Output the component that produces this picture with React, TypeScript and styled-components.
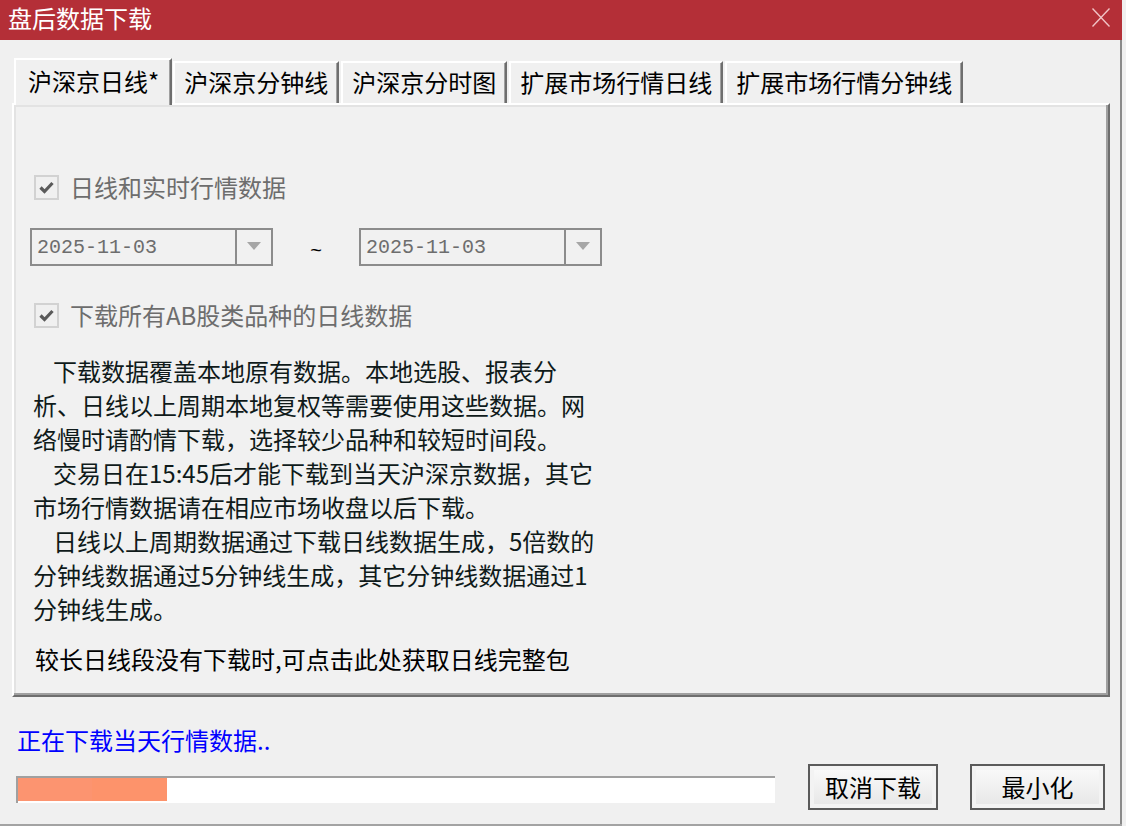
import styled, { createGlobalStyle } from "styled-components";

const GlobalStyle = createGlobalStyle`
	html, body {
		margin: 0;
		padding: 0;
		background: #f0f0f0;
	}
	body {
		font-family: "Noto Sans CJK SC", "Noto Sans", sans-serif;
	}
`;

const tabs = ["沪深京日线*", "沪深京分钟线", "沪深京分时图", "扩展市场行情日线", "扩展市场行情分钟线"];

const notes = [
	{ text: "下载数据覆盖本地原有数据。本地选股、报表分", indent: true },
	{ text: "析、日线以上周期本地复权等需要使用这些数据。网", indent: false },
	{ text: "络慢时请酌情下载，选择较少品种和较短时间段。", indent: false },
	{ text: "交易日在15:45后才能下载到当天沪深京数据，其它", indent: true },
	{ text: "市场行情数据请在相应市场收盘以后下载。", indent: false },
	{ text: "日线以上周期数据通过下载日线数据生成，5倍数的", indent: true },
	{ text: "分钟线数据通过5分钟线生成，其它分钟线数据通过1", indent: false },
	{ text: "分钟线生成。", indent: false },
];

const CheckMark = () => (
	<svg width="15" height="13" viewBox="0 0 15 13">
		<polyline points="1.5,6.5 5.5,10.5 13.5,2" fill="none" stroke="#5a5a5a" strokeWidth="3.2" />
	</svg>
);

const DateBox = ({ value }: { value: string }) => (
	<Combo>
		<ComboText>{value}</ComboText>
		<ComboButton>
			<svg width="14" height="9" viewBox="0 0 14 9">
				<polygon points="0,0 14,0 7,8" fill="#a6a6a6" />
			</svg>
		</ComboButton>
	</Combo>
);

const App = () => {
	const progress = 149;

	return (
		<>
			<GlobalStyle />
			<Window>
				<TitleBar>
					<Title>盘后数据下载</Title>
					<CloseButton>
						<svg width="18" height="19" viewBox="0 0 18 19">
							<line x1="0.5" y1="0.5" x2="17.5" y2="18.5" stroke="#f1c4c6" strokeWidth="1.4" />
							<line x1="17.5" y1="0.5" x2="0.5" y2="18.5" stroke="#f1c4c6" strokeWidth="1.4" />
						</svg>
					</CloseButton>
				</TitleBar>

				<Body>
					<TabStrip>
						{tabs.map((label, idx) => (
							<Tab key={`tab${idx}`} $active={idx === 0}>
								{label}
							</Tab>
						))}
					</TabStrip>

					<Panel>
						<CheckRow $top={69}>
							<CheckBox>
								<CheckMark />
							</CheckBox>
							<CheckLabel>日线和实时行情数据</CheckLabel>
						</CheckRow>

						<DateRow>
							<DateBox value="2025-11-03" />
							<Tilde>~</Tilde>
							<DateBox value="2025-11-03" />
						</DateRow>

						<CheckRow $top={36}>
							<CheckBox>
								<CheckMark />
							</CheckBox>
							<CheckLabel>下载所有AB股类品种的日线数据</CheckLabel>
						</CheckRow>

						<Notes>
							{notes.map((line, idx) => (
								<NoteLine key={`note${idx}`} $indent={line.indent}>
									{line.text}
								</NoteLine>
							))}
						</Notes>

						<LinkLine>较长日线段没有下载时,可点击此处获取日线完整包</LinkLine>
					</Panel>

					<Status>正在下载当天行情数据..</Status>

					<BottomRow>
						<ProgressTrack>
							<ProgressFill style={{ width: progress }} />
						</ProgressTrack>
						<Buttons>
							<Button $width={130}>取消下载</Button>
							<Button $width={135}>最小化</Button>
						</Buttons>
					</BottomRow>
				</Body>
			</Window>
		</>
	);
};

const Window = styled.div`
	width: 1122px;
	height: 826px;
	box-sizing: border-box;
	border-bottom: 2px solid #a3a3a3;
	display: flex;
	flex-direction: column;
	background: #f0f0f0;
`;

const TitleBar = styled.div`
	display: flex;
	align-items: center;
	justify-content: space-between;
	height: 40px;
	flex-shrink: 0;
	background: #b42f37;
	padding: 0 12px 0 8px;
`;

const Title = styled.span`
	color: #ffffff;
	font-size: 24px;
	line-height: 40px;
	margin-top: -4px;
`;

const CloseButton = styled.div`
	display: flex;
	margin-top: -6px;
`;

const Body = styled.div`
	flex: 1;
	display: flex;
	flex-direction: column;
	padding: 18px 0 0 12px;
	border-right: 2px solid #8a8a8a;
`;

const TabStrip = styled.div`
	display: flex;
	align-items: flex-end;
	gap: 2px;
	padding-left: 2px;
	position: relative;
	z-index: 1;
`;

const Tab = styled.div<{ $active: boolean }>`
	box-sizing: border-box;
	display: flex;
	align-items: center;
	height: ${(p) => (p.$active ? 47 : 42)}px;
	margin-bottom: ${(p) => (p.$active ? -2 : 0)}px;
	margin-right: ${(p) => (p.$active ? -1 : 0)}px;
	padding: ${(p) => (p.$active ? "0 11px 0 12px" : "0 9px 0 9px")};
	padding-bottom: ${(p) => (p.$active ? 4 : 2)}px;
	border-top: 2px solid #ffffff;
	border-left: 2px solid #ffffff;
	border-right: 2px solid #6e6e6e;
	box-shadow: inset -1px 0 0 #a0a0a0;
	background: #f0f0f0;
	font-size: 24px;
	line-height: 24px;
	color: #000000;
	white-space: nowrap;
`;

const Panel = styled.div`
	box-sizing: border-box;
	width: 1098px;
	height: 594px;
	border-top: 2px solid #ffffff;
	border-left: 2px solid #ffffff;
	border-right: 2px solid #6e6e6e;
	border-bottom: 2px solid #6e6e6e;
	box-shadow: inset -2px -2px 0 #a0a0a0, inset 2px 2px 0 #e3e3e3;
	background: #f1f1f1;
	display: flex;
	flex-direction: column;
	align-items: flex-start;
	padding-left: 16px;
`;

const CheckRow = styled.div<{ $top: number }>`
	display: flex;
	align-items: center;
	gap: 11px;
	margin-top: ${(p) => p.$top}px;
	margin-left: 4px;
	height: 26px;
`;

const CheckBox = styled.div`
	box-sizing: border-box;
	width: 25px;
	height: 25px;
	border: 2px solid #d2d2d2;
	background: #f0f0f0;
	display: flex;
	align-items: center;
	justify-content: center;
`;

const CheckLabel = styled.span`
	font-size: 24px;
	line-height: 26px;
	color: #6d6d6d;
	white-space: nowrap;
`;

const DateRow = styled.div`
	display: flex;
	align-items: center;
	margin-top: 28px;
`;

const Combo = styled.div`
	box-sizing: border-box;
	width: 243px;
	height: 38px;
	border: 2px solid #8c8c8c;
	display: flex;
	align-items: stretch;
`;

const ComboText = styled.div`
	flex: 1;
	display: flex;
	align-items: center;
	padding-left: 5px;
	font-family: "Liberation Mono", "DejaVu Sans Mono", monospace;
	font-size: 20px;
	color: #6d6d6d;
`;

const ComboButton = styled.div`
	width: 34px;
	border-left: 2px solid #8c8c8c;
	display: flex;
	align-items: center;
	justify-content: center;
	padding-bottom: 2px;
`;

const Tilde = styled.span`
	width: 86px;
	text-align: center;
	font-family: "Liberation Sans", sans-serif;
	font-size: 20px;
	line-height: 20px;
	padding-top: 6px;
	color: #000000;
`;

const Notes = styled.div`
	margin-top: 26px;
	margin-left: 3px;
	display: flex;
	flex-direction: column;
`;

const NoteLine = styled.div<{ $indent: boolean }>`
	font-size: 24px;
	line-height: 34px;
	height: 34px;
	color: #0f1a1a;
	white-space: nowrap;
	padding-left: ${(p) => (p.$indent ? 20 : 0)}px;
`;

const LinkLine = styled.div`
	margin-top: 16px;
	margin-left: 5px;
	font-size: 24px;
	line-height: 34px;
	color: #000000;
	white-space: nowrap;
	cursor: pointer;
`;

const Status = styled.div`
	margin-top: 30px;
	margin-left: 5px;
	font-size: 24px;
	line-height: 26px;
	color: #0000ff;
`;

const BottomRow = styled.div`
	display: flex;
	align-items: flex-start;
	margin-top: 11px;
	padding-left: 4px;
`;

const ProgressTrack = styled.div`
	box-sizing: border-box;
	width: 759px;
	height: 27px;
	margin-top: 12px;
	border-top: 2px solid #a0a0a0;
	border-left: 2px solid #a0a0a0;
	background: #ffffff;
	padding-bottom: 2px;
	display: flex;
`;

const ProgressFill = styled.div`
	height: 100%;
	background: linear-gradient(90deg, #fc9470 0 50%, #fd936b 50% 100%);
`;

const Buttons = styled.div`
	display: flex;
	gap: 32px;
	margin-left: 33px;
`;

const Button = styled.button<{ $width: number }>`
	box-sizing: border-box;
	width: ${(p) => p.$width}px;
	height: 46px;
	border: 2px solid #5a5a5a;
	background: linear-gradient(#fbfbfb, #e6e6e6);
	box-shadow: inset 0 0 0 4px #f3f3f3;
	font-family: "Noto Sans CJK SC", "Noto Sans", sans-serif;
	font-size: 24px;
	color: #000000;
	padding: 0 0 2px 0;
	display: flex;
	align-items: center;
	justify-content: center;
`;

export default App;
